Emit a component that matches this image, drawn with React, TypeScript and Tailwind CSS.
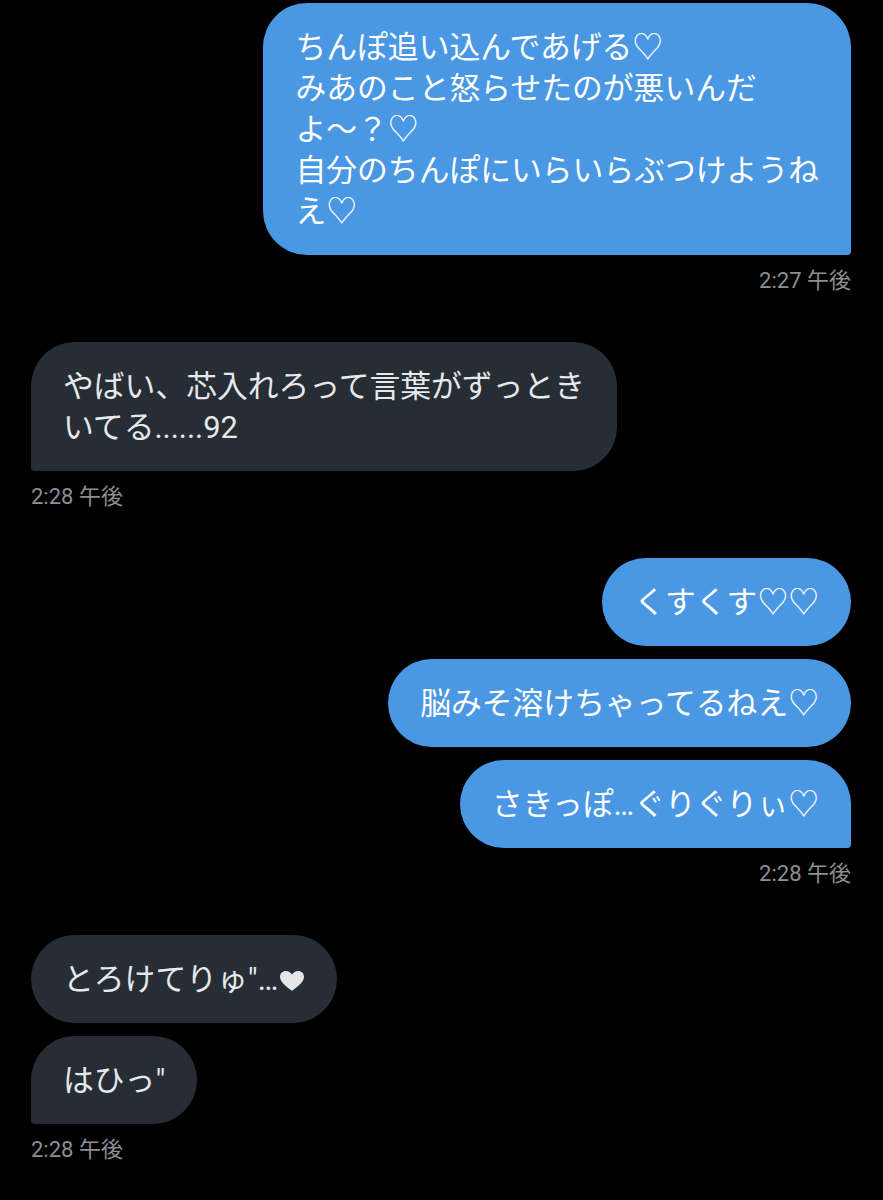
const FONT = "font-['Roboto','Noto_Sans_CJK_JP',sans-serif]"

type Side = "me" | "them"

function Bubble({
  side,
  last,
  children,
}: {
  side: Side
  last?: boolean
  children: React.ReactNode
}) {
  const color =
    side == "me" ? "bg-[#4a97e3] text-white" : "bg-[#262d34] text-[#e6e8ea]"
  const corner = last ? (side == "me" ? "rounded-br-[4px]" : "rounded-bl-[4px]") : ""
  return (
    <div
      className={`rounded-[44px] ${corner} ${color} px-[32px] py-[23.5px] text-[30.8px] leading-[41px] whitespace-nowrap`}
    >
      {children}
    </div>
  )
}

function Stamp({ side, time }: { side: Side; time: string }) {
  return (
    <div
      className={`mt-px text-[22px] leading-[24px] text-[#8d8f91] ${
        side == "me" ? "self-end" : "self-start"
      }`}
    >
      {time} 午後
    </div>
  )
}

function Group({
  side,
  time,
  messages,
}: {
  side: Side
  time: string
  messages: React.ReactNode[]
}) {
  return (
    <section
      className={`flex flex-col gap-[13px] ${side == "me" ? "items-end" : "items-start"}`}
    >
      {messages.map((m, i) => (
        <Bubble key={i} side={side} last={i == messages.length - 1}>
          {m}
        </Bubble>
      ))}
      <Stamp side={side} time={time} />
    </section>
  )
}

function Heart() {
  return (
    <svg
      viewBox="0 0 26 22"
      className="inline-block w-[26px] h-[22px] align-[-2px] ml-[1px]"
    >
      <path
        d="M13 21C9 17.6 1 12.8 1 6.8 1 3.4 3.6 1 6.8 1 9.6 1 11.6 2.6 13 4.6 14.4 2.6 16.4 1 19.2 1 22.4 1 25 3.4 25 6.8 25 12.8 17 17.6 13 21Z"
        fill="#e6e6e6"
      />
    </svg>
  )
}

export default function App() {
  return (
    <main
      className={`min-h-[1200px] w-full bg-black pt-[3px] pr-[32px] pl-[31px] flex flex-col gap-[49px] ${FONT}`}
    >
      <Group
        side="me"
        time="2:27"
        messages={[
          <>
            ちんぽ追い込んであげる♡
            <br />
            みあのこと怒らせたのが悪いんだ
            <br />
            よ～？♡
            <br />
            自分のちんぽにいらいらぶつけようね
            <br />
            え♡
          </>,
        ]}
      />
      <Group
        side="them"
        time="2:28"
        messages={[
          <>
            やばい、芯入れろって言葉がずっとき
            <br />
            いてる......92
          </>,
        ]}
      />
      <Group
        side="me"
        time="2:28"
        messages={["くすくす♡♡", "脳みそ溶けちゃってるねえ♡", "さきっぽ…ぐりぐりぃ♡"]}
      />
      <Group
        side="them"
        time="2:28"
        messages={[
          <>
            とろけてりゅ"…
            <Heart />
          </>,
          'はひっ"',
        ]}
      />
    </main>
  )
}
